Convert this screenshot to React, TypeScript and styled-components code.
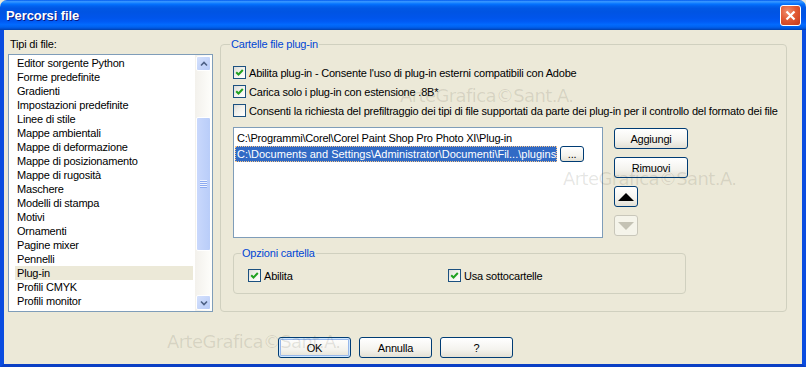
import styled, { createGlobalStyle } from "styled-components";

// styles

const GlobalStyle = createGlobalStyle`
  html, body {
    margin: 0;
    padding: 0;
    background: #ece9d8;
  }
  body {
    font-family: "Liberation Sans", Arial, sans-serif;
    font-size: 11px;
    letter-spacing: -0.2px;
    color: #000;
  }
`;

const Window = styled.div`
  position: relative;
  width: 806px;
  height: 367px;
  display: flex;
  flex-direction: column;
  overflow: hidden;
  border-radius: 7px 7px 0 0;
`;

const TitleBar = styled.div`
  height: 30px;
  flex: none;
  display: flex;
  align-items: center;
  justify-content: space-between;
  padding: 1px 5px 0 6px;
  box-sizing: border-box;
  background: linear-gradient(
    #0058ee 0%,
    #3593ff 5%,
    #288eff 8%,
    #127dff 11%,
    #036ffc 15%,
    #0262ee 20%,
    #0057e5 28%,
    #0054e3 40%,
    #0055eb 60%,
    #005bf5 72%,
    #026afe 82%,
    #0062ef 90%,
    #0052d6 95%,
    #0040ab 100%
  );
`;

const Title = styled.span`
  font-family: "Liberation Sans", Arial, sans-serif;
  font-weight: bold;
  font-size: 13px;
  letter-spacing: -0.1px;
  color: #fff;
  text-shadow: 1px 1px 0 #0a1883;
`;

const CloseButton = styled.div`
  width: 21px;
  height: 21px;
  box-sizing: border-box;
  border: 1px solid #fff;
  border-radius: 3px;
  background: radial-gradient(circle at 35% 30%, #f08e6f 0%, #e25a33 45%, #c7391a 100%);
  display: flex;
  align-items: center;
  justify-content: center;
`;

const Frame = styled.div`
  flex: 1;
  display: flex;
  flex-direction: column;
  border-left: 4px solid #0a4ce0;
  border-right: 4px solid #0a4ce0;
  border-bottom: 3px solid #0a3fc4;
  background: #ece9d8;
  padding: 7px 0 0 4px;
`;

const Main = styled.div`
  display: flex;
  gap: 7px;
  align-items: flex-start;
`;

const LeftColumn = styled.div`
  flex: none;
  display: flex;
  flex-direction: column;
  gap: 3px;
  width: 205px;
`;

const Label = styled.div`
  height: 14px;
  line-height: 14px;
  padding-left: 2px;
`;

const ListBox = styled.div`
  height: 258px;
  box-sizing: border-box;
  border: 1px solid #7f9db9;
  background: #fff;
  display: flex;
`;

const ListItems = styled.div`
  flex: 1;
  padding: 1px 2px 0 6px;
  overflow: hidden;
`;

const ListItem = styled.div<{ $selected?: boolean }>`
  height: 14px;
  line-height: 14px;
  padding-left: 2px;
  white-space: nowrap;
  background: ${(p) => (p.$selected ? "#ece9d8" : "transparent")};
`;

const ScrollBar = styled.div`
  width: 17px;
  flex: none;
  display: flex;
  flex-direction: column;
  background: linear-gradient(90deg, #f3f1ec, #fefefb);
`;

const ScrollButton = styled.div<{ $bottom?: boolean }>`
  flex: none;
  box-sizing: border-box;
  margin: ${(p) => (p.$bottom ? "0 1px 1px 1px" : "1px 1px 0 1px")};
  height: 15px;
  border: 1px solid #fff;
  border-radius: 2px;
  background: linear-gradient(135deg, #d5e1fc, #b7cbf8);
  display: flex;
  align-items: center;
  justify-content: center;
`;

const Track = styled.div`
  flex: 1;
  padding-top: 46px;
`;

const Thumb = styled.div`
  height: 134px;
  margin: 0 1px;
  box-sizing: border-box;
  border: 1px solid #fff;
  border-radius: 2px;
  background: linear-gradient(90deg, #c9d8fc, #b9cdf9);
  display: flex;
  align-items: center;
  justify-content: center;
`;

const Grip = styled.div`
  width: 7px;
  height: 8px;
  background: repeating-linear-gradient(#eef3fe 0 1px, #8caaf0 1px 2px);
`;

const GroupBox = styled.fieldset<{ $width: number }>`
  width: ${(p) => p.$width}px;
  min-width: 0;
  flex: none;
  box-sizing: border-box;
  margin: 0;
  border: 1px solid #d0d0bf;
  border-radius: 4px;
`;

const OuterGroup = styled(GroupBox)`
  height: 275px;
  padding: 12px 12px 0 12px;
`;

const SubGroup = styled(GroupBox)`
  height: 48px;
  padding: 6px 14px 0 14px;
  margin-top: 8px;
`;

const Legend = styled.legend<{ $shift: number }>`
  color: #0046d5;
  padding: 0 1px;
  margin-left: ${(p) => p.$shift}px;
  line-height: 14px;
`;

const CheckRow = styled.label`
  height: 19px;
  display: flex;
  align-items: center;
  gap: 3px;
  white-space: nowrap;
`;

const Box = styled.span`
  width: 13px;
  height: 13px;
  flex: none;
  box-sizing: border-box;
  border: 1px solid #1c5180;
  background: linear-gradient(135deg, #dcdcd7 0%, #f2f1ec 45%, #ffffff 100%);
  display: flex;
  align-items: center;
  justify-content: center;
`;

const OptionRow = styled.div`
  display: grid;
  grid-template-columns: 200px 1fr;
`;

const PathArea = styled.div`
  display: flex;
  gap: 11px;
  margin-top: 7px;
`;

const PathList = styled.div`
  width: 370px;
  height: 111px;
  flex: none;
  box-sizing: border-box;
  border: 1px solid #7f9db9;
  background: #fff;
  padding: 2px 1px;
`;

const PathRow = styled.div`
  height: 16px;
  display: flex;
  align-items: center;
  gap: 3px;
`;

const PathText = styled.span<{ $selected?: boolean }>`
  height: 16px;
  line-height: 16px;
  padding: 0 1px 0 2px;
  white-space: nowrap;
  box-sizing: border-box;
  letter-spacing: ${(p) => (p.$selected ? "0" : "-0.2px")};
  color: ${(p) => (p.$selected ? "#fff" : "#000")};
  background: ${(p) => (p.$selected ? "#316ac5" : "transparent")};
  outline: ${(p) => (p.$selected ? "1px dotted #f9c88a" : "none")};
  outline-offset: -1px;
`;

const SideButtons = styled.div`
  display: flex;
  flex-direction: column;
  align-items: flex-start;
  gap: 8px;
  padding-top: 1px;
`;

const Button = styled.button<{ $w: number; $h?: number; $default?: boolean }>`
  width: ${(p) => p.$w}px;
  height: ${(p) => p.$h ?? 21}px;
  flex: none;
  box-sizing: border-box;
  padding: 0;
  border: 1px solid #003c74;
  border-radius: 3px;
  background: linear-gradient(#ffffff 0%, #f4f3ee 60%, #e3e0d4 100%);
  font-family: "Liberation Sans", Arial, sans-serif;
  font-size: 11px;
  letter-spacing: -0.2px;
  color: #000;
  display: flex;
  align-items: center;
  justify-content: center;
  box-shadow: ${(p) =>
    p.$default ? "inset 0 0 0 1px #cee7ff, inset 0 0 0 2px #98b8ea" : "none"};

  &:disabled {
    border-color: #c9c7ba;
    background: #f5f4ea;
  }
`;

const Footer = styled.div`
  display: flex;
  gap: 8px;
  padding: 25px 0 0 270px;
`;

const Watermark = styled.span<{ $x: number; $y: number }>`
  position: absolute;
  left: ${(p) => p.$x}px;
  top: ${(p) => p.$y}px;
  font-family: "DejaVu Sans", Verdana, sans-serif;
  font-size: 18px;
  letter-spacing: -0.6px;
  color: rgba(60, 60, 40, 0.13);
  white-space: nowrap;
  pointer-events: none;
`;

// data

const FILE_TYPES = [
  "Editor sorgente Python",
  "Forme predefinite",
  "Gradienti",
  "Impostazioni predefinite",
  "Linee di stile",
  "Mappe ambientali",
  "Mappe di deformazione",
  "Mappe di posizionamento",
  "Mappe di rugosità",
  "Maschere",
  "Modelli di stampa",
  "Motivi",
  "Ornamenti",
  "Pagine mixer",
  "Pennelli",
  "Plug-in",
  "Profili CMYK",
  "Profili monitor",
];

// small parts

const Check = ({ checked }: { checked?: boolean }) => (
  <Box>
    {checked && (
      <svg width="9" height="9" viewBox="0 0 9 9">
        <path d="M1.2 4.2 L3.5 6.5 L7.8 2" fill="none" stroke="#21a121" strokeWidth="2" />
      </svg>
    )}
  </Box>
);

const Chevron = ({ down }: { down?: boolean }) => (
  <svg width="8" height="6" viewBox="0 0 8 6">
    <path
      d={down ? "M1 1.5 L4 4.5 L7 1.5" : "M1 4.5 L4 1.5 L7 4.5"}
      fill="none"
      stroke="#4d6185"
      strokeWidth="1.6"
    />
  </svg>
);

const Triangle = ({ down, color }: { down?: boolean; color: string }) => (
  <svg width="16" height="8" viewBox="0 0 16 8">
    <path d={down ? "M0 0 H16 L8 8 Z" : "M8 0 L16 8 H0 Z"} fill={color} />
  </svg>
);

// main app

export default function App() {
  return (
    <Window>
      <GlobalStyle />
      <TitleBar>
        <Title>Percorsi file</Title>
        <CloseButton>
          <svg width="11" height="11" viewBox="0 0 11 11">
            <path d="M1.5 1.5 L9.5 9.5 M9.5 1.5 L1.5 9.5" stroke="#fff" strokeWidth="2.2" />
          </svg>
        </CloseButton>
      </TitleBar>
      <Frame>
        <Main>
          <LeftColumn>
            <Label>Tipi di file:</Label>
            <ListBox>
              <ListItems>
                {FILE_TYPES.map((name) => (
                  <ListItem key={name} $selected={name === "Plug-in"}>
                    {name}
                  </ListItem>
                ))}
              </ListItems>
              <ScrollBar>
                <ScrollButton>
                  <Chevron />
                </ScrollButton>
                <Track>
                  <Thumb>
                    <Grip />
                  </Thumb>
                </Track>
                <ScrollButton $bottom>
                  <Chevron down />
                </ScrollButton>
              </ScrollBar>
            </ListBox>
          </LeftColumn>

          <OuterGroup $width={567}>
            <Legend $shift={-3}>Cartelle file plug-in</Legend>
            <CheckRow>
              <Check checked />
              Abilita plug-in - Consente l'uso di plug-in esterni compatibili con Adobe
            </CheckRow>
            <CheckRow>
              <Check checked />
              Carica solo i plug-in con estensione .8B*
            </CheckRow>
            <CheckRow>
              <Check />
              Consenti la richiesta del prefiltraggio dei tipi di file supportati da parte dei plug-in per il controllo del formato dei file
            </CheckRow>
            <PathArea>
              <PathList>
                <PathRow>
                  <PathText>C:\Programmi\Corel\Corel Paint Shop Pro Photo XI\Plug-in</PathText>
                </PathRow>
                <PathRow>
                  <PathText $selected>
                    C:\Documents and Settings\Administrator\Documenti\Fil...\plugins
                  </PathText>
                  <Button $w={24} $h={16}>...</Button>
                </PathRow>
              </PathList>
              <SideButtons>
                <Button $w={74}>Aggiungi</Button>
                <Button $w={74}>Rimuovi</Button>
                <Button $w={24}>
                  <Triangle color="#000" />
                </Button>
                <Button $w={24} disabled>
                  <Triangle down color="#c4c2b4" />
                </Button>
              </SideButtons>
            </PathArea>
            <SubGroup $width={453}>
              <Legend $shift={-7}>Opzioni cartella</Legend>
              <OptionRow>
                <CheckRow>
                  <Check checked />
                  Abilita
                </CheckRow>
                <CheckRow>
                  <Check checked />
                  Usa sottocartelle
                </CheckRow>
              </OptionRow>
            </SubGroup>
          </OuterGroup>
        </Main>

        <Footer>
          <Button $w={73} $default>
            OK
          </Button>
          <Button $w={73}>Annulla</Button>
          <Button $w={73}>?</Button>
        </Footer>
      </Frame>

      <Watermark $x={400} $y={85}>ArteGrafica©Sant.A.</Watermark>
      <Watermark $x={563} $y={168}>ArteGrafica©Sant.A.</Watermark>
      <Watermark $x={167} $y={331}>ArteGrafica©Sant.A.</Watermark>
    </Window>
  );
}
